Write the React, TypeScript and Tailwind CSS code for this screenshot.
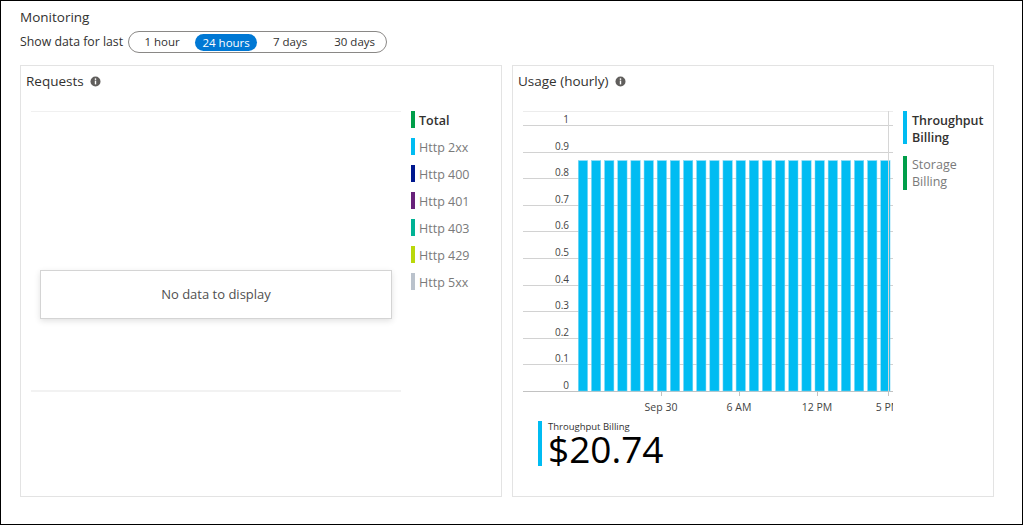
import React from "react";

const InfoIcon = () => (
  <svg width="11" height="11" viewBox="0 0 11 11">
    <circle cx="5.5" cy="5.5" r="5" fill="#605e5c" />
    <rect x="4.8" y="4.6" width="1.4" height="3.8" fill="#fff" />
    <circle cx="5.5" cy="3.1" r="0.85" fill="#fff" />
  </svg>
);

const requestLegend = [
  { label: "Total", color: "bg-[#009e49]", bold: true },
  { label: "Http 2xx", color: "bg-[#00bcf2]" },
  { label: "Http 400", color: "bg-[#00188f]" },
  { label: "Http 401", color: "bg-[#68217a]" },
  { label: "Http 403", color: "bg-[#00b294]" },
  { label: "Http 429", color: "bg-[#bad80a]" },
  { label: "Http 5xx", color: "bg-[#bac2cc]" },
];

const yTicks = [1, 0.9, 0.8, 0.7, 0.6, 0.5, 0.4, 0.3, 0.2, 0.1, 0];
const xTicks = [
  { x: 138, label: "Sep 30" },
  { x: 216, label: "6 AM" },
  { x: 294, label: "12 PM" },
  { x: 365, label: "5 PM" },
];

function UsageChart() {
  const yOf = (v: number) => 280 - v * 266;
  const bars = Array.from({ length: 24 }, (_, i) => 55.3 + i * 13.15);
  return (
    <svg width="370" height="310" className="block" style={{ fontFamily: "'Open Sans', sans-serif" }}>
      <line x1="0" x2="370" y1="0.5" y2="0.5" stroke="#ececec" />
      {yTicks.map((v) => (
        <g key={v}>
          <line
            x1="0"
            x2="370"
            y1={Math.round(yOf(v)) + 0.5}
            y2={Math.round(yOf(v)) + 0.5}
            stroke={v === 0 ? "#c2c2c2" : "#d2d2d2"}
          />
          <text x="46" y={Math.round(yOf(v)) - 5} textAnchor="end" dominantBaseline="middle" fontSize="10" fill="#444">
            {v}
          </text>
        </g>
      ))}
      {bars.map((x, i) => (
        <rect key={i} x={x} y={yOf(0.866)} width="9.3" height={280 - yOf(0.866)} fill="#00bcf2" stroke="#7dd6f3" strokeWidth="0.5" />
      ))}
      <line x1="365.5" x2="365.5" y1="0" y2="280" stroke="#d6d6d6" />
      {xTicks.map((t) => (
        <g key={t.label}>
          <line x1={t.x + 0.5} x2={t.x + 0.5} y1="280" y2="285" stroke="#c2c2c2" />
          <text x={t.x} y="297" textAnchor="middle" dominantBaseline="middle" fontSize="10.5" fill="#444">
            {t.label}
          </text>
        </g>
      ))}
    </svg>
  );
}

export default function App(): JSX.Element {
  return (
    <div className="w-[1023px] h-[525px] border border-black bg-white font-['Open_Sans',sans-serif] text-[#323130]">
      {/* Header */}
      <div className="pl-[19px] pt-[6px]">
        <div className="h-[20px] leading-[20px] text-[13.5px]">Monitoring</div>
        <div className="mt-[4px] flex items-center h-[22px]">
          <span className="text-[12.3px] leading-[20px]">Show data for last</span>
          <div className="ml-[5px] flex items-center h-[22px] border border-[#8a8886] rounded-full text-[11.5px] text-[#323130]">
            <span className="w-[66px] text-center">1 hour</span>
            <span className="w-[62px] h-[17px] leading-[17px] text-center rounded-full bg-[#0078d4] text-white">24 hours</span>
            <span className="w-[66px] text-center">7 days</span>
            <span className="w-[63px] text-center">30 days</span>
          </div>
        </div>
      </div>

      {/* Panels */}
      <div className="mt-[12px] ml-[19px] flex gap-[10px]">
        {/* Requests */}
        <section className="w-[482px] h-[432px] border border-[#e3e3e3] px-[5px] pt-[5px]">
          <div className="h-[20px] flex items-center gap-[6px] text-[13.5px]">
            <span>Requests</span>
            <InfoIcon />
          </div>
          <div className="mt-[20px] flex items-start">
            <div className="relative ml-[5px] w-[370px] h-[281px] border-t border-t-[#f0f0f0] border-b-2 border-b-[#f2f2f2]">
              <div className="absolute left-[9px] top-[158px] w-[352px] h-[49px] border border-[#d4d4d4] bg-white shadow-[0_2px_6px_rgba(0,0,0,0.12)] flex items-center justify-center pt-[1px] text-[13px] text-[#505050]">
                No data to display
              </div>
            </div>
            <div className="ml-[10px] flex flex-col gap-[10px]">
              {requestLegend.map((item) => (
                <div key={item.label} className="flex items-center h-[17px]">
                  <span className={`w-[4px] h-[17px] ${item.color}`} />
                  <span
                    className={
                      item.bold
                        ? "ml-[4px] pt-[2px] text-[12.5px] leading-[17px] font-semibold text-[#323130]"
                        : "ml-[4px] pt-[2px] text-[12.5px] leading-[17px] text-[#7a7a7a]"
                    }
                  >
                    {item.label}
                  </span>
                </div>
              ))}
            </div>
          </div>
        </section>

        {/* Usage */}
        <section className="w-[482px] h-[432px] border border-[#e3e3e3] px-[5px] pt-[5px]">
          <div className="h-[20px] flex items-center gap-[6px] text-[13.5px]">
            <span>Usage (hourly)</span>
            <InfoIcon />
          </div>
          <div className="mt-[20px] flex items-start">
            <div className="ml-[5px]">
              <UsageChart />
            </div>
            <div className="ml-[10px] flex flex-col gap-[10px] text-[12.5px] leading-[17px]">
              <div className="flex">
                <span className="w-[4px] h-[33px] bg-[#00bcf2]" />
                <span className="ml-[5px] pt-[1px] font-semibold text-[#323130]">
                  Throughput
                  <br />
                  Billing
                </span>
              </div>
              <div className="flex">
                <span className="w-[4px] h-[34px] bg-[#009e49]" />
                <span className="ml-[5px] text-[#7a7a7a]">
                  Storage
                  <br />
                  Billing
                </span>
              </div>
            </div>
          </div>
          <div className="ml-[20px] flex">
            <span className="w-[4px] h-[45px] bg-[#00bcf2]" />
            <div className="ml-[6px] flex flex-col">
              <span className="text-[9.5px] leading-[11px] text-[#323130]">Throughput Billing</span>
              <span className="text-[37px] leading-[34px] text-black">$20.74</span>
            </div>
          </div>
        </section>
      </div>
    </div>
  );
}
